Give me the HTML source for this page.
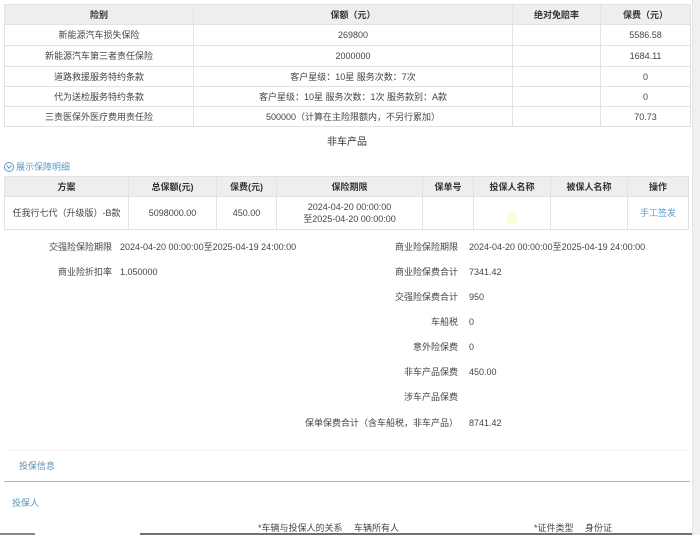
<!DOCTYPE html>
<html><head><meta charset="utf-8">
<style>
*{margin:0;padding:0;box-sizing:border-box}
body{width:700px;height:535px;overflow:hidden;background:#fff;font-family:"Liberation Sans","Noto Sans CJK SC",sans-serif;font-size:9px;line-height:12px;color:#444;position:relative}
.a{position:absolute;white-space:nowrap;line-height:12px}
table{position:absolute;border-collapse:collapse;table-layout:fixed}
td,th{border:1px solid #e2e2e2;text-align:center;font-weight:normal;font-size:9px;line-height:12px;color:#444;padding:0}
th{background:#eeeeef;color:#333;font-weight:bold}
.lab{position:absolute;text-align:right;white-space:nowrap;width:120px;line-height:12px}
</style></head><body>
<table style="left:4px;top:4px;width:686px">
<colgroup><col style="width:189px"><col style="width:319px"><col style="width:88px"><col style="width:90px"></colgroup>
<tr style="height:20px"><th>险别</th><th>保额（元）</th><th>绝对免赔率</th><th>保费（元）</th></tr>
<tr style="height:21px"><td>新能源汽车损失保险</td><td>269800</td><td></td><td>5586.58</td></tr>
<tr style="height:21px"><td>新能源汽车第三者责任保险</td><td>2000000</td><td></td><td>1684.11</td></tr>
<tr style="height:20px"><td>道路救援服务特约条款</td><td>客户星级：10星 服务次数：7次</td><td></td><td>0</td></tr>
<tr style="height:20px"><td>代为送检服务特约条款</td><td>客户星级：10星 服务次数：1次 服务款别：A款</td><td></td><td>0</td></tr>
<tr style="height:20px"><td>三责医保外医疗费用责任险</td><td>500000（计算在主险限额内，不另行累加）</td><td></td><td>70.73</td></tr>
</table>
<div class="a" style="left:327px;top:137px;font-size:10px;color:#333">非车产品</div>
<div class="a" style="left:4px;top:162px;width:10px;height:10px;border:1px solid #5a9ec9;border-radius:50%"></div>
<div class="a" style="left:7px;top:164px;width:4px;height:4px;border-right:1px solid #5a9ec9;border-bottom:1px solid #5a9ec9;transform:rotate(45deg)"></div>
<div class="a" style="left:16px;top:161px;color:#5a9ec9">展示保障明细</div>
<table style="left:4px;top:176px;width:684px">
<colgroup><col style="width:124px"><col style="width:88px"><col style="width:60px"><col style="width:146px"><col style="width:51px"><col style="width:77px"><col style="width:77px"><col style="width:61px"></colgroup>
<tr style="height:20px"><th>方案</th><th>总保额(元)</th><th>保费(元)</th><th>保险期限</th><th>保单号</th><th>投保人名称</th><th>被保人名称</th><th>操作</th></tr>
<tr style="height:33px"><td>任我行七代（升级版）-B款</td><td>5098000.00</td><td>450.00</td><td>2024-04-20 00:00:00<br>至2025-04-20 00:00:00</td><td></td><td><span style="display:inline-block;width:10px;height:10px;background:#fdfbd8;margin-top:12px"></span></td><td></td><td style="color:#5a9ec9">手工签发</td></tr>
</table>
<div class="lab" style="left:-8px;top:241px">交强险保险期限</div><div class="a" style="left:120px;top:241px">2024-04-20 00:00:00至2025-04-19 24:00:00</div>
<div class="lab" style="left:-8px;top:266px">商业险折扣率</div><div class="a" style="left:120px;top:266px">1.050000</div>
<div class="lab" style="left:338px;top:241px">商业险保险期限</div><div class="a" style="left:469px;top:241px">2024-04-20 00:00:00至2025-04-19 24:00:00</div>
<div class="lab" style="left:338px;top:266px">商业险保费合计</div><div class="a" style="left:469px;top:266px">7341.42</div>
<div class="lab" style="left:338px;top:291px">交强险保费合计</div><div class="a" style="left:469px;top:291px">950</div>
<div class="lab" style="left:338px;top:316px">车船税</div><div class="a" style="left:469px;top:316px">0</div>
<div class="lab" style="left:338px;top:341px">意外险保费</div><div class="a" style="left:469px;top:341px">0</div>
<div class="lab" style="left:338px;top:366px">非车产品保费</div><div class="a" style="left:469px;top:366px">450.00</div>
<div class="lab" style="left:338px;top:391px">涉车产品保费</div>
<div class="lab" style="left:258px;top:417px;width:200px">保单保费合计（含车船税，非车产品）</div><div class="a" style="left:469px;top:417px">8741.42</div>
<div class="a" style="left:6px;top:450px;width:680px;height:1px;background:#f2f2f2"></div>
<div class="a" style="left:19px;top:460px;color:#5a8fb5">投保信息</div>
<div class="a" style="left:4px;top:481px;width:686px;height:1px;background:#9cbcbc"></div>
<div class="a" style="left:12px;top:497px;color:#5a8fb5">投保人</div>
<div class="a" style="left:258px;top:522px">*车辆与投保人的关系　 车辆所有人</div>
<div class="a" style="left:534px;top:522px">*证件类型　 身份证</div>
<div class="a" style="left:0;top:533px;width:35px;height:2px;background:#888"></div>
<div class="a" style="left:140px;top:533px;width:552px;height:2px;background:#7a6e66"></div>
<div class="a" style="left:692px;top:0;width:8px;height:535px;background:#f0f0f0;border-left:1px solid #e4e4e4"></div>
</body></html>
